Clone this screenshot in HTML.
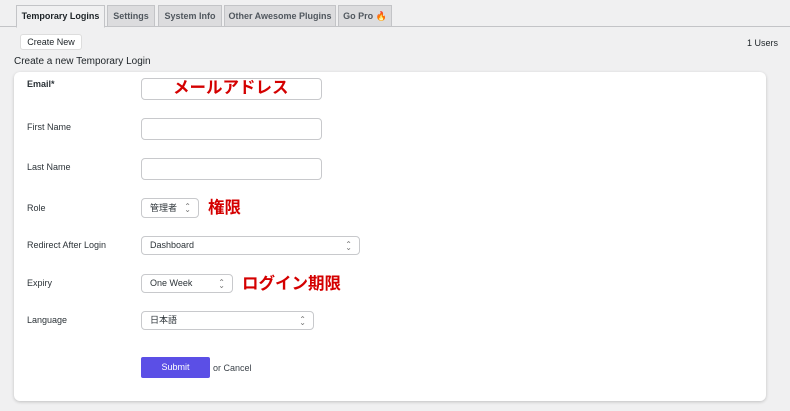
<!DOCTYPE html><html><head><meta charset="utf-8"><style>
body{margin:0;width:790px;height:411px;background:#f0f0f1;font-family:"Liberation Sans","Noto Sans CJK JP",sans-serif;color:#1d2327;position:relative;overflow:hidden;font-size:9px}
.a{position:absolute}
.tabline{left:0;right:0;top:26px;height:1px;background:#c3c4c7}
.tab{top:5px;height:20px;border:1px solid #c3c4c7;background:#dcdcde;line-height:20px;text-align:center;font-weight:bold;font-size:9px;color:#50575e}
.tab.on{background:#f0f0f1;border-bottom-color:#f0f0f1;height:21px;color:#1d2327}
.card{left:14px;top:72px;width:752px;height:329px;background:#fff;border-radius:6px;box-shadow:0 1px 3px rgba(0,0,0,.2)}
.lb{left:27px;font-size:9px;color:#2c3338}
.in{left:141px;border:1px solid #c8c9cc;border-radius:4px;background:#fff;box-sizing:border-box}
.sel{font-size:9px;line-height:17px;padding-left:8px;color:#2c3338}
.sel:after{content:"⌃";position:absolute;right:7px;top:-1px;font-size:8px;color:#777}
.sel:before{content:"⌄";position:absolute;right:7px;top:2px;font-size:8px;color:#777}
.red{color:#d40000;font-weight:bold;font-size:16.5px;font-family:"Noto Sans CJK JP",sans-serif}
</style></head><body>
<div class="a tabline"></div>
<div class="a tab on" style="left:16px;width:87px">Temporary Logins</div>
<div class="a tab" style="left:107px;width:46px">Settings</div>
<div class="a tab" style="left:158px;width:62px">System Info</div>
<div class="a tab" style="left:224px;width:110px">Other Awesome Plugins</div>
<div class="a tab" style="left:338px;width:52px">Go Pro <span style="color:#f0a020">🔥</span></div>
<div class="a" style="left:20px;top:34px;width:62px;height:16px;background:#fff;border:1px solid #ddd;border-radius:3px;box-sizing:border-box;text-align:center;line-height:14px;font-size:9px">Create New</div>
<div class="a" style="right:12px;top:38px;font-size:9px">1 Users</div>
<div class="a" style="left:14px;top:56px;font-size:10px">Create a new Temporary Login</div>
<div class="a card"></div>
<div class="a lb" style="top:79px;font-weight:bold">Email*</div>
<div class="a in" style="top:78px;width:181px;height:22px"></div>
<div class="a red" style="left:173px;top:74px">メールアドレス</div>
<div class="a lb" style="top:122px">First Name</div>
<div class="a in" style="top:118px;width:181px;height:22px"></div>
<div class="a lb" style="top:162px">Last Name</div>
<div class="a in" style="top:158px;width:181px;height:22px"></div>
<div class="a lb" style="top:203px">Role</div>
<div class="a in sel" style="top:198px;width:58px;height:20px;line-height:18px">管理者</div>
<div class="a red" style="left:208px;top:194px">権限</div>
<div class="a lb" style="top:240px">Redirect After Login</div>
<div class="a in sel" style="top:236px;width:219px;height:19px">Dashboard</div>
<div class="a lb" style="top:278px">Expiry</div>
<div class="a in sel" style="top:274px;width:92px;height:19px">One Week</div>
<div class="a red" style="left:242px;top:270px">ログイン期限</div>
<div class="a lb" style="top:315px">Language</div>
<div class="a in sel" style="top:311px;width:173px;height:19px">日本語</div>
<div class="a" style="left:141px;top:357px;width:69px;height:21px;background:#5b4fe6;border-radius:2px;color:#fff;text-align:center;line-height:21px;font-size:9px">Submit</div>
<div class="a" style="left:213px;top:363px;font-size:9px;color:#3c434a">or Cancel</div>
</body></html>
